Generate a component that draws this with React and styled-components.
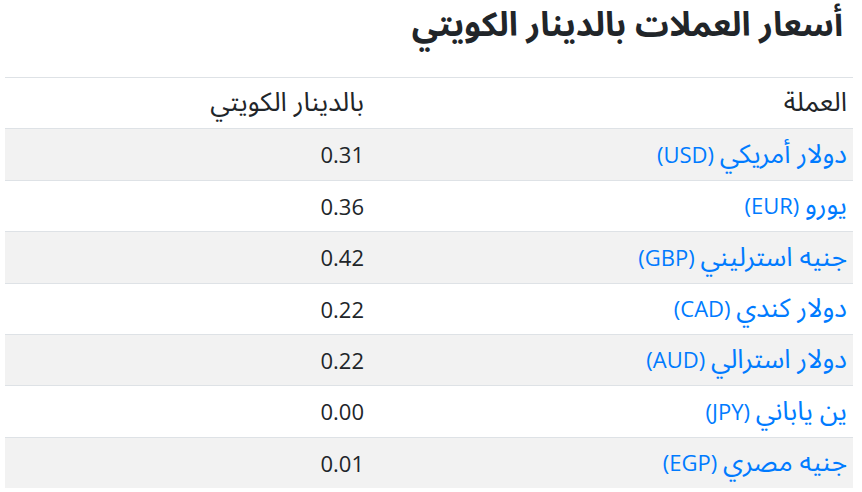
import React from "react";
import styled, { createGlobalStyle } from "styled-components";

const Global = createGlobalStyle`
  html, body { margin: 0; padding: 0; background: #fff; }
  body { font-family: "Open Sans", "Noto Sans", "DejaVu Sans", sans-serif; color: #212529; }
`;

const Page = styled.div`
  direction: rtl;
  padding: 0 9px 0 5px;
  box-sizing: border-box;
  width: 862px;
`;

const Title = styled.h1`
  margin: 0;
  padding: 0 10px 0 0;
  font-family: "Noto Sans Arabic", "DejaVu Sans", sans-serif;
  font-size: 33.5px;
  font-weight: 700;
  line-height: 52px;
  height: 77px;
  box-sizing: border-box;
`;

const Table = styled.table`
  width: 848px;
  border-collapse: collapse;
  font-size: 22px;
  line-height: 1.2;
`;

const Row = styled.tr`
  background: ${(p) => (p.$striped ? "#f2f2f2" : "#fff")};
`;

const HeadCell = styled.th`
  text-align: right;
  font-weight: 400;
  padding: 0 6px;
  height: 50.4px;
  border-top: 1px solid #dee2e6;
  border-bottom: 1px solid #dee2e6;
  width: ${(p) => p.$w || "auto"};
`;

const Cell = styled.td`
  text-align: right;
  padding: 0 6px;
  height: 50.4px;
  border-top: 1px solid #dee2e6;
`;

const Ar = styled.span`
  font-family: "Noto Sans Arabic", "DejaVu Sans", sans-serif;
  font-size: 26.5px;
  line-height: 1;
`;

const Link = styled.a`
  color: #007bff;
  text-decoration: none;
`;

const rows = [
  ["دولار أمريكي", "USD", "0.31"],
  ["يورو", "EUR", "0.36"],
  ["جنيه استرليني", "GBP", "0.42"],
  ["دولار كندي", "CAD", "0.22"],
  ["دولار استرالي", "AUD", "0.22"],
  ["ين ياباني", "JPY", "0.00"],
  ["جنيه مصري", "EGP", "0.01"],
];

export default function App() {
  return (
    <>
      <Global />
      <Page>
        <Title>أسعار العملات بالدينار الكويتي</Title>
        <Table>
          <thead>
            <tr>
              <HeadCell $w="471px">
                <Ar>العملة</Ar>
              </HeadCell>
              <HeadCell>
                <Ar>بالدينار الكويتي</Ar>
              </HeadCell>
            </tr>
          </thead>
          <tbody>
            {rows.map(([name, code, val], i) => (
              <Row key={code} $striped={i % 2 === 0}>
                <Cell>
                  <Link href="#">
                    <Ar>{name}</Ar> ({code})
                  </Link>
                </Cell>
                <Cell>{val}</Cell>
              </Row>
            ))}
          </tbody>
        </Table>
      </Page>
    </>
  );
}
